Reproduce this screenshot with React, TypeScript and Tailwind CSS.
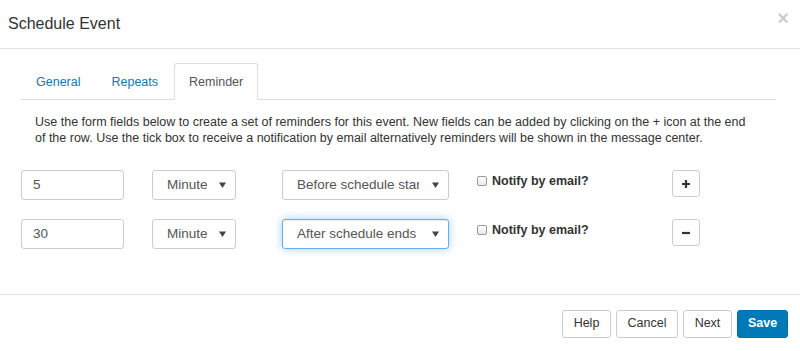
import { useState } from 'react'

const TABS = ['General', 'Repeats', 'Reminder']

type Reminder = { amount: string; unit: string; when: string; focused?: boolean }

const REMINDERS: Reminder[] = [
  { amount: '5', unit: 'Minute', when: 'Before schedule start' },
  { amount: '30', unit: 'Minute', when: 'After schedule ends', focused: true },
]

function Caret() {
  return (
    <svg width="7" height="6" viewBox="0 0 7 6" className="absolute right-[9px] top-1/2 -translate-y-1/2">
      <path d="M0 0.5h7L3.5 6z" fill="#444" />
    </svg>
  )
}

function FakeSelect({ value, className, focused }: { value: string; className: string; focused?: boolean }) {
  return (
    <div
      className={
        'relative flex h-[30px] items-center rounded-[3px] border bg-white pl-[14px] text-[13.5px] text-[#555] ' +
        className +
        (focused
          ? ' border-[#66afe9] shadow-[inset_0_1px_1px_rgba(0,0,0,0.075),0_0_8px_rgba(102,175,233,0.6)]'
          : ' border-[#ccc]')
      }
    >
      <span className="overflow-hidden whitespace-nowrap">{value}</span>
      <Caret />
    </div>
  )
}

function Btn({ children, width, primary }: { children: React.ReactNode; width: string; primary?: boolean }) {
  return (
    <button
      type="button"
      className={
        'flex h-[28px] items-center justify-center rounded-[3px] border text-[12.5px] ' +
        width +
        (primary
          ? ' border-[#006ea8] bg-[#0079b8] font-bold text-white'
          : ' border-[#ccc] bg-white text-[#333]')
      }
    >
      {children}
    </button>
  )
}

export default function App() {
  const [tab, setTab] = useState('Reminder')

  return (
    <div className="flex h-[351px] w-[800px] flex-col bg-white font-['Liberation_Sans',Arial,sans-serif] text-[#333]">
      <header className="flex h-[49px] shrink-0 justify-between border-b border-[#e5e5e5] pl-2 pr-[11px]">
        <h4 className="mt-[14px] text-[16px] leading-[20px]">Schedule Event</h4>
        <button type="button" className="mt-[8px] h-[20px] text-[20px] font-bold leading-[20px] text-black opacity-20">
          ×
        </button>
      </header>

      <div className="flex-1 pl-[21px] pr-[24px] pt-[14px]">
        <ul className="flex border-b border-[#ddd]">
          {TABS.map((t) => (
            <li key={t} className="-mb-px mr-[1px]">
              <button
                type="button"
                onClick={() => setTab(t)}
                className={
                  'h-[37px] rounded-t-[3px] border px-[14px] text-[12.5px] leading-[16px] ' +
                  (tab === t
                    ? 'border-[#ddd] border-b-white bg-white text-[#555]'
                    : 'border-transparent text-[#1178b6]')
                }
              >
                {t}
              </button>
            </li>
          ))}
        </ul>

        <p className="mt-[14px] w-[728px] pl-[14px] text-[12.5px] leading-[16px] text-[#333]">
          Use the form fields below to create a set of reminders for this event. New fields can be added by
          clicking on the + icon at the end of the row. Use the tick box to receive a notification by email
          alternatively reminders will be shown in the message center.
        </p>

        <div className="mt-[24px] flex flex-col gap-[19px]">
          {REMINDERS.map((r, i) => (
            <div key={i} className="flex items-start">
              <div className="flex h-[30px] w-[103px] items-center rounded-[3px] border border-[#ccc] px-[11px] text-[13.5px] text-[#555]">
                {r.amount}
              </div>
              <div className="ml-[28px]">
                <FakeSelect value={r.unit} className="w-[84px] pr-[18px]" />
              </div>
              <div className="ml-[46px]">
                <FakeSelect value={r.when} className="w-[167px] pr-[29px]" focused={r.focused} />
              </div>
              <label className="ml-[28px] mt-[3px] flex w-[195px] items-center gap-[5px] text-[12.5px] font-bold leading-[16px] text-[#333]">
                <span className="h-[10px] w-[10px] rounded-[2px] border border-[#999] bg-gradient-to-b from-white to-[#e8e8e8]" />
                Notify by email?
              </label>
              <button
                type="button"
                className="flex h-[27px] w-[28px] items-center justify-center rounded-[3px] border border-[#ccc] bg-white"
              >
                <svg width="10" height="10" viewBox="0 0 10 10">
                  {i === 0 ? (
                    <path d="M5 1v8M1 5h8" stroke="#333" strokeWidth="2.2" />
                  ) : (
                    <path d="M1 5h8" stroke="#333" strokeWidth="2.2" />
                  )}
                </svg>
              </button>
            </div>
          ))}
        </div>
      </div>

      <footer className="flex h-[57px] shrink-0 items-center justify-end gap-[5px] border-t border-[#e5e5e5] pr-[12px] pt-[1px]">
        <Btn width="w-[49px]">Help</Btn>
        <Btn width="w-[62px]">Cancel</Btn>
        <Btn width="w-[49px]">Next</Btn>
        <Btn width="w-[51px]" primary>
          Save
        </Btn>
      </footer>
    </div>
  )
}
